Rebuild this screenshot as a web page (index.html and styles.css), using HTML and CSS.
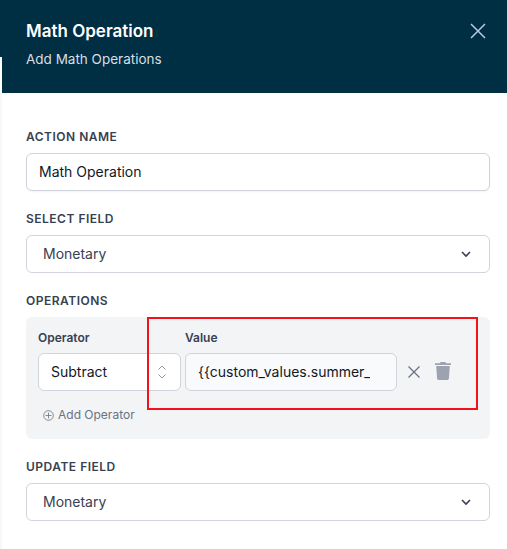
FILE: index.html
```html
<!DOCTYPE html>
<html lang="en">
<head>
<meta charset="utf-8">
<title>Math Operation</title>
<link rel="stylesheet" href="styles.css">
</head>
<body>
<div class="drawer">
  <header class="head">
    <div>
      <h1 class="title">Math Operation</h1>
      <p class="sub">Add Math Operations</p>
    </div>
    <svg class="close" width="16" height="16" viewBox="0 0 16 16" fill="none" stroke="#b9c6ea" stroke-width="1.5"><path d="M1 1l14 14M15 1L1 15"/></svg>
  </header>
  <span class="notch"></span>
  <main class="form">
    <div class="field">
      <label class="label">ACTION NAME</label>
      <div class="input">Math Operation</div>
    </div>
    <div class="field">
      <label class="label">SELECT FIELD</label>
      <div class="select"><span>Monetary</span>
        <svg width="12" height="12" viewBox="0 0 12 12" fill="none" stroke="#374151" stroke-width="1.6"><path d="M2 4l4 4 4-4"/></svg>
      </div>
    </div>
    <div class="field">
      <label class="label">OPERATIONS</label>
      <div class="panel">
        <div class="row">
          <div class="col op">
            <span class="collabel">Operator</span>
            <div class="opselect"><span>Subtract</span>
              <svg width="10" height="16" viewBox="0 0 10 16" fill="none" stroke="#8f97a3" stroke-width="1"><path d="M1.5 5.5l3.5-3.5 3.5 3.5M1.5 10.5l3.5 3.5 3.5-3.5"/></svg>
            </div>
          </div>
          <div class="col val">
            <span class="collabel">Value</span>
            <div class="valinput"><span class="clip">{{custom_values.summer_discount}}</span></div>
          </div>
          <svg class="x" width="12" height="12" viewBox="0 0 12 12" fill="none" stroke="#6b7280" stroke-width="1.3"><path d="M.5.5l11 11M11.5.5l-11 11"/></svg>
          <svg class="trash" width="16" height="18" viewBox="0 0 16 18" fill="#9ca3af"><path d="M5.5 0h5l.6 1.2H16v1.7H0V1.2h4.9zM1.2 4h13.6l-.9 12.6c-.1.8-.6 1.4-1.4 1.4H3.5c-.8 0-1.3-.6-1.4-1.4z"/></svg>
        </div>
        <div class="add">
          <svg width="11" height="11" viewBox="0 0 11 11" fill="none" stroke="#6b7280" stroke-width=".8"><circle cx="5.5" cy="5.5" r="4.8"/><path d="M5.5 2.5v6M2.5 5.5h6"/></svg>
          <span>Add Operator</span>
        </div>
        <span class="highlight"></span>
      </div>
    </div>
    <div class="field">
      <label class="label">UPDATE FIELD</label>
      <div class="select"><span>Monetary</span>
        <svg width="12" height="12" viewBox="0 0 12 12" fill="none" stroke="#374151" stroke-width="1.6"><path d="M2 4l4 4 4-4"/></svg>
      </div>
    </div>
  </main>
</div>
</body>
</html>
```
FILE: styles.css
```css
* { box-sizing: border-box; }
html, body { margin: 0; height: 100%; }
body {
  background: #fff;
  font-family: Inter, "Liberation Sans", sans-serif;
  overflow: hidden;
}
.drawer { position: relative; height: 549px; }
.head {
  height: 93px;
  background: #002e42;
  padding: 21px 21px 0 26px;
  display: flex;
  justify-content: space-between;
  align-items: flex-start;
}
.title { margin: 0; font-size: 17px; line-height: 20px; font-weight: 600; color: #fff; }
.sub { margin: 9px 0 0; font-size: 13.5px; line-height: 18px; color: #d8dee4; }
.close { margin-top: 2px; }
.notch { position: absolute; left: 0; top: 57px; width: 2px; height: 36px; background: #fff; }
.form {
  padding: 36px 17px 0 24px;
  background: #fff;
  border-left: 2px solid #f8f8f9;
  height: 456px;
}
.field { margin-bottom: 20px; }
.label {
  display: block;
  font-size: 12px;
  line-height: 16px;
  font-weight: 600;
  letter-spacing: .5px;
  color: #374151;
  margin-bottom: 8px;
}
.input, .select {
  height: 38px;
  border: 1px solid #d1d5db;
  border-radius: 6px;
  background: #fff;
  font-size: 14px;
  display: flex;
  align-items: center;
  padding-bottom: 1px;
}
.input { padding-left: 12px; color: #111827; box-shadow: 0 1px 2px rgba(0,0,0,.05); }
.select { padding-left: 16px; padding-right: 17px; color: #374151; justify-content: space-between; }
.panel {
  position: relative;
  height: 122px;
  background: #f3f4f6;
  border-radius: 6px;
  padding: 13px 12px 0;
}
.row { display: flex; align-items: flex-end; }
.col { display: flex; flex-direction: column; }
.collabel { font-size: 12px; line-height: 16px; font-weight: 600; color: #374151; margin-bottom: 7px; }
.op { width: 143px; margin-right: 4px; }
.val { width: 212px; }
.opselect, .valinput {
  height: 38px;
  border: 1px solid #d1d5db;
  border-radius: 6px;
  font-size: 14px;
  color: #111827;
  display: flex;
  align-items: center;
  padding-bottom: 1px;
}
.opselect { background: #fff; justify-content: space-between; padding-left: 12px; padding-right: 13px; }
.valinput { background: #f9fafb; padding-left: 12px; }
.clip { display: block; width: 172px; overflow: hidden; white-space: nowrap; }
.x { margin: 0 0 13px 11px; }
.trash { margin: 0 0 11px 15px; }
.add {
  display: flex;
  align-items: center;
  gap: 4px;
  margin: 16px 0 0 5px;
  font-size: 12px;
  line-height: 16px;
  color: #6b7280;
}
.highlight {
  position: absolute;
  left: 121px;
  top: 0;
  width: 331px;
  height: 93px;
  border: 2px solid #f5101c;
}
```
